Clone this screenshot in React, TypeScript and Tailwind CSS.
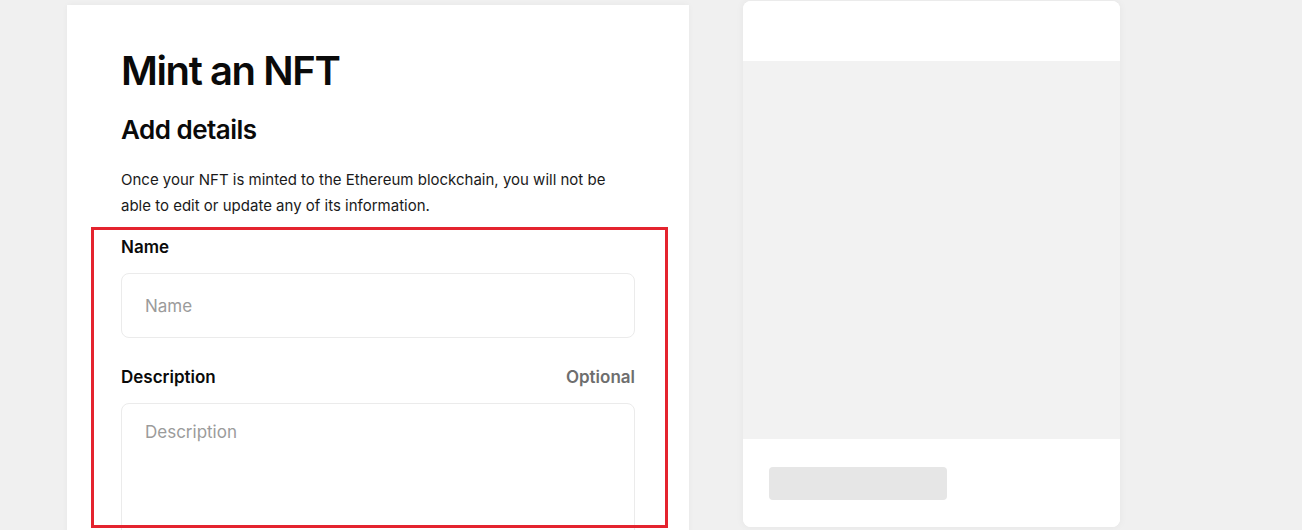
export default function App() {
  return (
    <div
      className="flex h-[530px] w-[1302px] overflow-hidden bg-[#f0f0f0] text-[#0a0a0a]"
      style={{ fontFamily: "Inter, 'Noto Sans', sans-serif" }}
    >
      {/* form card */}
      <div className="relative ml-[67px] mt-[5px] w-[622px] shrink-0 self-start bg-white px-[54px] pt-[42px] shadow-[0_0_6px_rgba(0,0,0,0.04)]">
        <h1 className="text-[40px] font-semibold leading-[48px] tracking-[-0.035em]">Mint an NFT</h1>
        <h2 className="mt-[18px] text-[26px] font-semibold leading-[34px] tracking-[-0.02em]">Add details</h2>
        <p className="mt-[20px] max-w-[492px] text-[15px] leading-[26px] text-[#1a1a1a]">
          Once your NFT is minted to the Ethereum blockchain, you will not be able to edit or update any of its
          information.
        </p>

        <div className="mt-[17px]">
          <label className="block text-[17px] font-semibold leading-[22px]">Name</label>
          <input
            placeholder="Name"
            className="mt-[15px] h-[65px] w-full rounded-lg border border-[#ebebeb] px-[23px] text-[17px] outline-none placeholder:text-[#9b9b9b]"
          />
        </div>

        <div className="mt-[28px]">
          <div className="flex items-center justify-between text-[17px] font-semibold leading-[22px]">
            <span>Description</span>
            <span className="text-[#6e6e6e]">Optional</span>
          </div>
          <textarea
            placeholder="Description"
            className="mt-[15px] h-[150px] w-full resize-none rounded-lg border border-[#ebebeb] px-[23px] pt-[16px] text-[17px] outline-none placeholder:text-[#9b9b9b]"
          />
        </div>

        {/* highlight annotation */}
        <div className="pointer-events-none absolute left-[24px] top-[222px] h-[301px] w-[577px] border-[3px] border-[#e4232e]" />
      </div>

      {/* preview card */}
      <div className="ml-[54px] mt-[1px] flex h-[526px] w-[377px] shrink-0 flex-col overflow-hidden rounded-lg bg-white shadow-[0_0_8px_rgba(0,0,0,0.05)]">
        <div className="h-[60px] bg-white" />
        <div className="h-[378px] bg-[#f2f2f2]" />
        <div className="flex flex-1 items-start bg-white px-[26px] pt-[28px]">
          <div className="h-[33px] w-[178px] rounded bg-[#e6e6e6]" />
        </div>
      </div>
    </div>
  );
}
